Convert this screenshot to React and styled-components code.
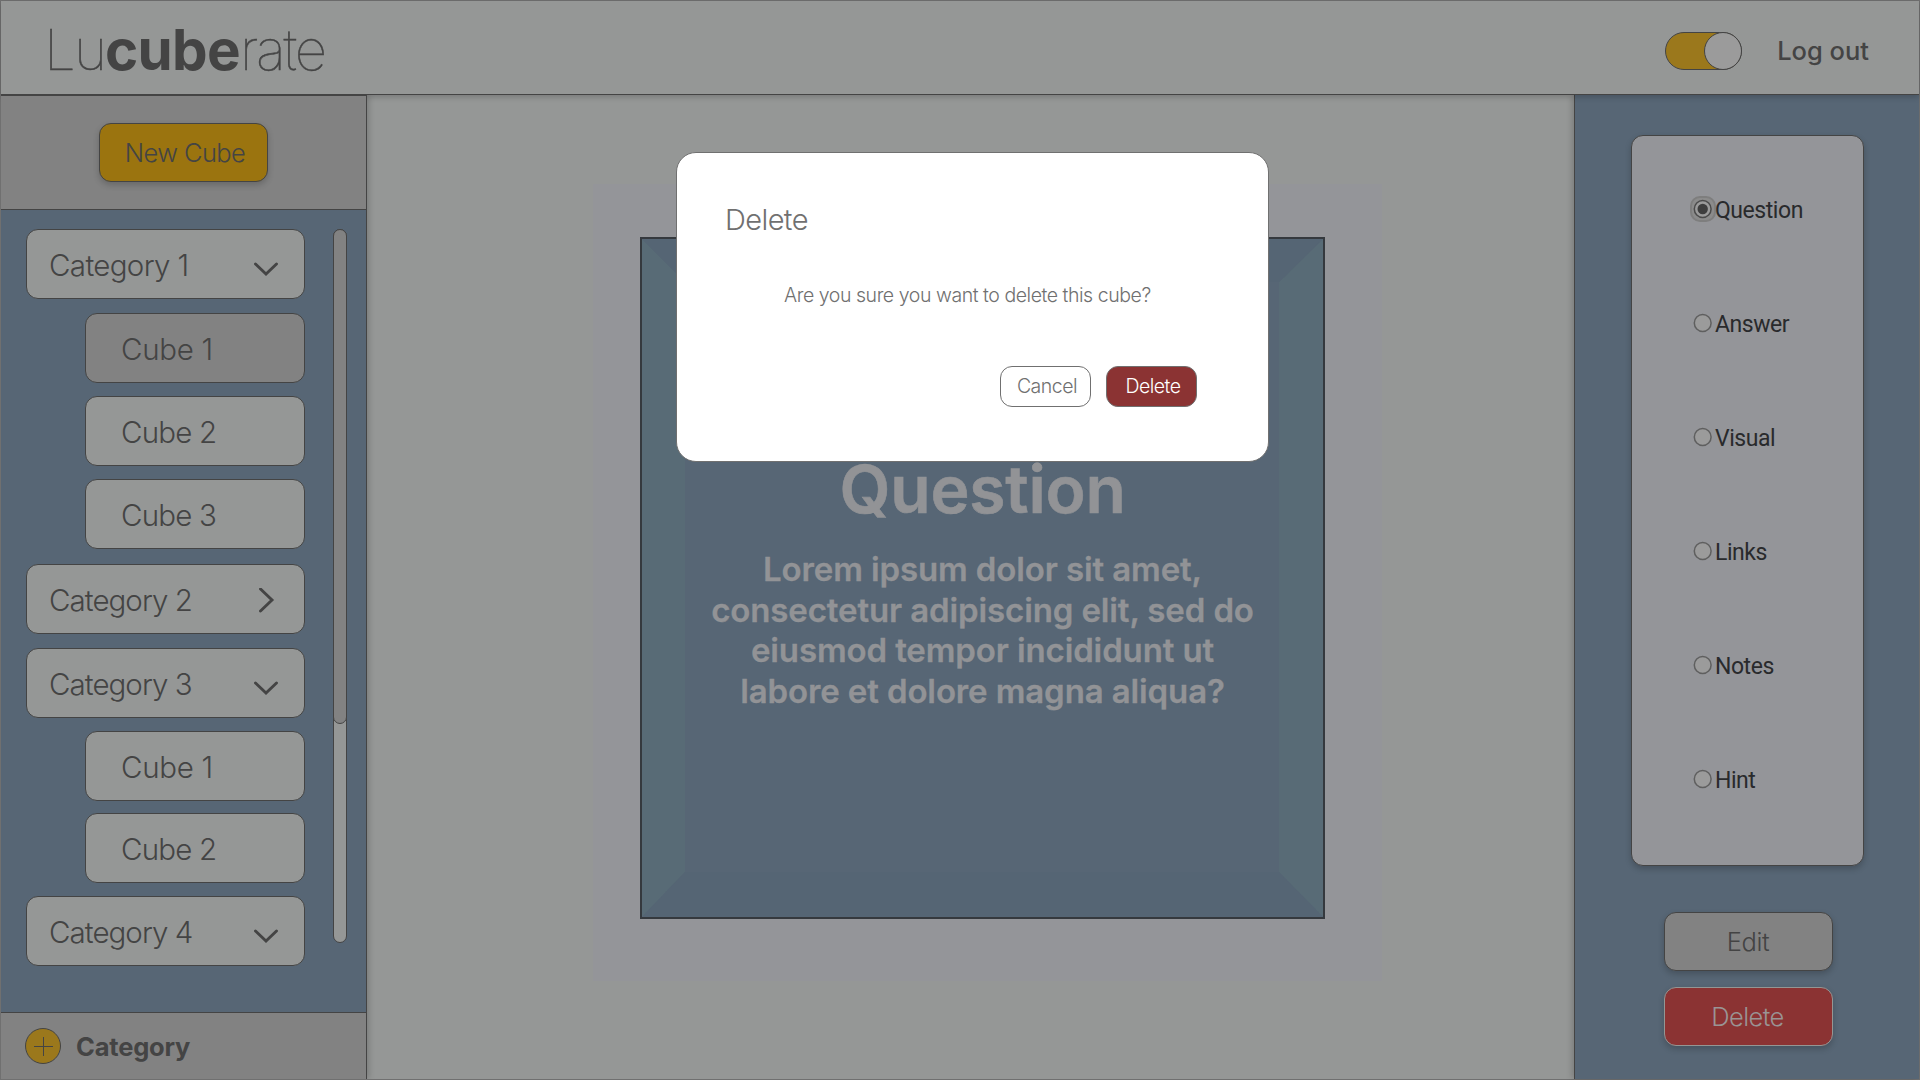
import React from "react";
import styled, { createGlobalStyle, css } from "styled-components";

const c = {
  ink: "#444444",
  paper: "#959796",
  grey: "#828282",
  blue: "#576675",
  gold: "#9b740f",
  red: "#8b3333",
  mist: "#949599",
};

const Global = createGlobalStyle`
  * { box-sizing: border-box; }
  body { margin: 0; overflow: hidden; }
  button { font: inherit; color: inherit; cursor: pointer; }
`;

const Frame = styled.div`
  position: relative;
  width: 1920px;
  height: 1080px;
  display: flex;
  flex-direction: column;
  border: 1px solid #707070;
  background: ${c.paper};
  color: ${c.ink};
  font-family: "Inter", "Liberation Sans", sans-serif;
  font-weight: 300;
`;

const Header = styled.header`
  position: relative;
  z-index: 2;
  flex: none;
  height: 94px;
  display: flex;
  align-items: center;
  padding: 7px 50px 0 43px;
  background: ${c.paper};
  border-bottom: 1px solid ${c.ink};
  box-shadow: 0 2px 6px rgba(0, 0, 0, 0.2);
`;

const Logo = styled.h1`
  margin: -3px auto 0 0;
  display: flex;
  font-size: 56.5px;
  line-height: 68px;
  font-weight: 200;
`;

const LogoThin = styled.span`
  letter-spacing: ${(p) => p.$track}px;
  font-weight: 100;
  -webkit-text-stroke: 0.5px ${c.ink};
`;

const LogoBold = styled.span`
  font-weight: 700;
  letter-spacing: -0.7px;
`;

const Toggle = styled.span`
  width: 77px;
  height: 38px;
  display: flex;
  justify-content: flex-end;
  border: 1px solid ${c.ink};
  border-radius: 19px;
  background: #9b781c;
`;

const Knob = styled.span`
  width: 38px;
  height: 38px;
  margin: -1px;
  border: 1px solid ${c.ink};
  border-radius: 50%;
  background: #9b9b9b;
`;

const LogOut = styled.a`
  margin-left: 35px;
  font-size: 25.5px;
  line-height: 32px;
  font-weight: 500;
`;

const Body = styled.div`
  flex: 1;
  min-height: 0;
  display: grid;
  grid-template-columns: 366px 1fr 345px;
`;

const Sidebar = styled.aside`
  position: relative;
  z-index: 3;
  display: flex;
  flex-direction: column;
  border-top: 1px solid ${c.ink};
  border-right: 1px solid ${c.ink};
  background: ${c.blue};
  box-shadow: 2px 0 6px rgba(0, 0, 0, 0.18);
  clip-path: inset(0 -12px 0 0);
`;

const SidebarTop = styled.div`
  height: 114px;
  display: flex;
  justify-content: center;
  padding-top: 27px;
  background: ${c.grey};
  border-bottom: 1px solid ${c.ink};
`;

const BigButton = styled.button`
  width: 169px;
  height: 59px;
  padding: ${(p) => p.$pad || "0"};
  border: 1px solid ${(p) => p.$line || c.ink};
  border-radius: 12px;
  background: ${(p) => p.$bg};
  color: ${(p) => p.$fg || c.ink};
  font-size: 25.5px;
  line-height: 32px;
  letter-spacing: ${(p) => p.$track || 0}px;
  box-shadow: 0 3px 6px rgba(0, 0, 0, 0.2);
`;

const SidebarBody = styled.div`
  flex: 1;
  display: flex;
  justify-content: space-between;
  padding: 19px 19px 0 25px;
`;

const List = styled.div`
  width: 279px;
  display: flex;
  flex-direction: column;
  align-items: flex-end;
`;

const Item = styled.div`
  flex: none;
  width: 279px;
  height: 70px;
  margin-bottom: ${(p) => p.$gap}px;
  display: flex;
  align-items: center;
  justify-content: space-between;
  padding: 1px 24px 0 22px;
  border: 1px solid ${c.ink};
  border-radius: 12px;
  background: ${c.paper};
  font-size: 29.5px;
  line-height: 36px;
  letter-spacing: ${(p) => p.$track}px;
  ${(p) =>
    p.$cube &&
    css`
      width: 220px;
      padding-left: 35px;
    `}
  ${(p) => p.$active && css`background: ${c.grey};`}
`;

const Arrow = styled.svg`
  display: block;
  width: 28px;
  height: 28px;
  margin-top: 4px;
  fill: none;
  stroke: ${c.ink};
  stroke-width: 2.9;
  stroke-linecap: round;
  stroke-linejoin: miter;
`;

const Track = styled.div`
  width: 14px;
  height: 714px;
  border: 1px solid ${c.ink};
  border-radius: 7px;
  background: ${c.paper};
`;

const Thumb = styled.div`
  height: 495px;
  margin: -1px;
  border: 1px solid ${c.ink};
  border-radius: 7px;
  background: ${c.grey};
`;

const SidebarFoot = styled.div`
  height: 67px;
  display: flex;
  align-items: center;
  gap: 15px;
  padding-left: 24px;
  border-top: 1px solid ${c.ink};
  background: ${c.grey};
  font-size: 25.5px;
  font-weight: 700;
  letter-spacing: -0.2px;
`;

const Plus = styled.svg`
  display: block;
  width: 36px;
  height: 36px;
  fill: #9b781c;
  stroke: ${c.ink};
  stroke-width: 1;
`;

const Canvas = styled.main`
  display: flex;
  padding: 89px 0 0 226px;
`;

const Stage = styled.section`
  width: 789px;
  height: 797px;
  padding: 53px 0 0 47px;
  background: ${c.mist};
`;

const Cube = styled.div`
  width: 685px;
  height: 682px;
  display: grid;
  border: 2px solid #35393e;
  background: ${c.blue};
  > * {
    grid-area: 1 / 1;
  }
`;

const Bevel = styled.svg`
  display: block;
  width: 681px;
  height: 678px;
`;

const CubeText = styled.div`
  padding: 212px 50px 0;
  text-align: center;
  color: #929396;
  font-weight: 600;
`;

const CubeTitle = styled.h2`
  margin: 0;
  font-size: 66px;
  line-height: 76px;
  font-weight: 600;
  letter-spacing: -0.2px;
  -webkit-text-stroke: 0.6px #929396;
`;

const CubeCopy = styled.p`
  margin: 22px 0 0;
  font-size: 33px;
  line-height: 40.6px;
  letter-spacing: -0.12px;
  -webkit-text-stroke: 0.3px #929396;
`;

const Line = styled.span`
  display: block;
  white-space: nowrap;
`;

const RightPanel = styled.aside`
  position: relative;
  z-index: 1;
  display: flex;
  flex-direction: column;
  align-items: center;
  padding: 40px 0 0 0;
  border-left: 1px solid ${c.ink};
  background: ${c.blue};
  box-shadow: -2px 0 6px rgba(0, 0, 0, 0.18);
`;

const SideCard = styled.div`
  width: 233px;
  height: 731px;
  margin: 0 0 46px 1px;
  display: flex;
  flex-direction: column;
  justify-content: space-between;
  padding: 58px 0 69px 57px;
  border: 1px solid ${c.ink};
  border-radius: 12px;
  background: ${c.mist};
  box-shadow: 0 3px 6px rgba(0, 0, 0, 0.2);
`;

const Option = styled.label`
  height: 32px;
  display: flex;
  align-items: center;
  padding-top: 1px;
  color: #292a2c;
  font: 400 23px/32px "Roboto", "Liberation Sans", sans-serif;
  letter-spacing: -0.45px;
`;

const Radio = styled.svg`
  display: block;
  width: 28px;
  height: 28px;
  margin: -3px -2px 0 0;
`;

const Actions = styled.div`
  display: flex;
  flex-direction: column;
  gap: 16px;
  margin-left: 3px;
`;

const Overlay = styled.div`
  position: absolute;
  z-index: 10;
  left: 675px;
  top: 151px;
`;

const Modal = styled.div`
  width: 593px;
  height: 310px;
  display: flex;
  flex-direction: column;
  padding: 49px 71px 0 48px;
  border: 1px solid #707070;
  border-radius: 20px;
  background: #ffffff;
  color: #707070;
`;

const ModalTitle = styled.h3`
  margin: 0;
  font-size: 29px;
  line-height: 36px;
  font-weight: 300;
  letter-spacing: -0.6px;
`;

const ModalText = styled.p`
  margin: 45px 0 0 59px;
  font-size: 19.5px;
  line-height: 24px;
  letter-spacing: -0.45px;
  white-space: nowrap;
`;

const ModalActions = styled.div`
  display: flex;
  justify-content: flex-end;
  gap: 15px;
  margin-top: 59px;
`;

const SmallButton = styled.button`
  width: 91px;
  height: 41px;
  padding: 0 0 1px 3px;
  border: 1px solid #707070;
  border-radius: 12px;
  background: ${(p) => p.$bg};
  color: ${(p) => p.$fg};
  font-size: 19.5px;
  line-height: 24px;
  letter-spacing: -0.5px;
`;

const rows = [
  { label: "Category 1", dir: "down", gap: 14, track: -0.65 },
  { label: "Cube 1", active: true, gap: 13, track: -0.3 },
  { label: "Cube 2", gap: 13, track: -0.8 },
  { label: "Cube 3", gap: 15, track: -0.8 },
  { label: "Category 2", dir: "right", gap: 14, track: -0.95 },
  { label: "Category 3", dir: "down", gap: 13, track: -0.95 },
  { label: "Cube 1", gap: 12, track: -0.3 },
  { label: "Cube 2", gap: 13, track: -0.8 },
  { label: "Category 4", dir: "down", gap: 0, track: -0.95 },
];

const options = ["Question", "Answer", "Visual", "Links", "Notes", "Hint"];

function Chevron({ dir }) {
  return (
    <Arrow viewBox="0 0 28 28">
      {dir === "down" ? (
        <path d="M3.5 11 L14 21 L24.5 11" />
      ) : (
        <path d="M8.5 1 L20 12 L8.5 23" />
      )}
    </Arrow>
  );
}

function RadioMark({ on }) {
  return (
    <Radio viewBox="0 0 28 28">
      {on && <rect x="2" y="2" width="24" height="24" rx="9" fill="#8b8b8b" stroke="#7e7e7e" strokeWidth="2" />}
      <circle cx="13.7" cy="14" r="8.4" fill="#9b9b9b" stroke={on ? "#4b4b4b" : "#5f5f5f"} strokeWidth="1.5" />
      {on && <circle cx="13.7" cy="14" r="5.2" fill="#3e3e3e" />}
    </Radio>
  );
}

export default function App() {
  return (
    <>
      <Global />
      <Frame>
        <Header>
          <Logo>
            <LogoThin $track={-1.9}>Lu</LogoThin>
            <LogoBold>cube</LogoBold>
            <LogoThin $track={-2.2}>rate</LogoThin>
          </Logo>
          <Toggle>
            <Knob />
          </Toggle>
          <LogOut>Log out</LogOut>
        </Header>

        <Body>
          <Sidebar>
            <SidebarTop>
              <BigButton $bg={c.gold} $pad="1px 0 0 3px" $track={-0.6}>
                New Cube
              </BigButton>
            </SidebarTop>
            <SidebarBody>
              <List>
                {rows.map((r, i) => (
                  <Item key={i} $cube={!r.dir} $active={r.active} $gap={r.gap} $track={r.track}>
                    {r.label}
                    {r.dir && <Chevron dir={r.dir} />}
                  </Item>
                ))}
              </List>
              <Track>
                <Thumb />
              </Track>
            </SidebarBody>
            <SidebarFoot>
              <Plus viewBox="0 0 36 36">
                <circle cx="18" cy="18" r="17.5" />
                <path d="M18.5 9 V28 M9 18.5 H28" />
              </Plus>
              Category
            </SidebarFoot>
          </Sidebar>

          <Canvas>
            <Stage>
              <Cube>
                <Bevel viewBox="0 0 681 678">
                  <path d="M0 0 L43 43 V633 L0 678 Z M681 0 L637 43 V633 L681 678 Z" fill="#586b76" />
                  <path d="M0 0 H681 L637 43 H43 Z M0 678 H681 L637 633 H43 Z" fill="#556574" />
                </Bevel>
                <CubeText>
                  <CubeTitle>Question</CubeTitle>
                  <CubeCopy>
                    <Line>Lorem ipsum dolor sit amet,</Line>
                    <Line>consectetur adipiscing elit, sed do</Line>
                    <Line>eiusmod tempor incididunt ut</Line>
                    <Line>labore et dolore magna aliqua?</Line>
                  </CubeCopy>
                </CubeText>
              </Cube>
            </Stage>
          </Canvas>

          <RightPanel>
            <SideCard>
              {options.map((o, i) => (
                <Option key={o}>
                  <RadioMark on={i === 0} />
                  {o}
                </Option>
              ))}
            </SideCard>
            <Actions>
              <BigButton $bg={c.grey} $track={-0.4} $pad="0 1px 0 0">
                Edit
              </BigButton>
              <BigButton $bg={c.red} $fg="#9a9494" $line="#949694" $track={-0.6} $pad="0 2px 0 0">
                Delete
              </BigButton>
            </Actions>
          </RightPanel>
        </Body>

        <Overlay>
          <Modal role="dialog">
            <ModalTitle>Delete</ModalTitle>
            <ModalText>Are you sure you want to delete this cube?</ModalText>
            <ModalActions>
              <SmallButton $bg="#ffffff" $fg="#707070">
                Cancel
              </SmallButton>
              <SmallButton $bg={c.red} $fg="#ffffff">
                Delete
              </SmallButton>
            </ModalActions>
          </Modal>
        </Overlay>
      </Frame>
    </>
  );
}
